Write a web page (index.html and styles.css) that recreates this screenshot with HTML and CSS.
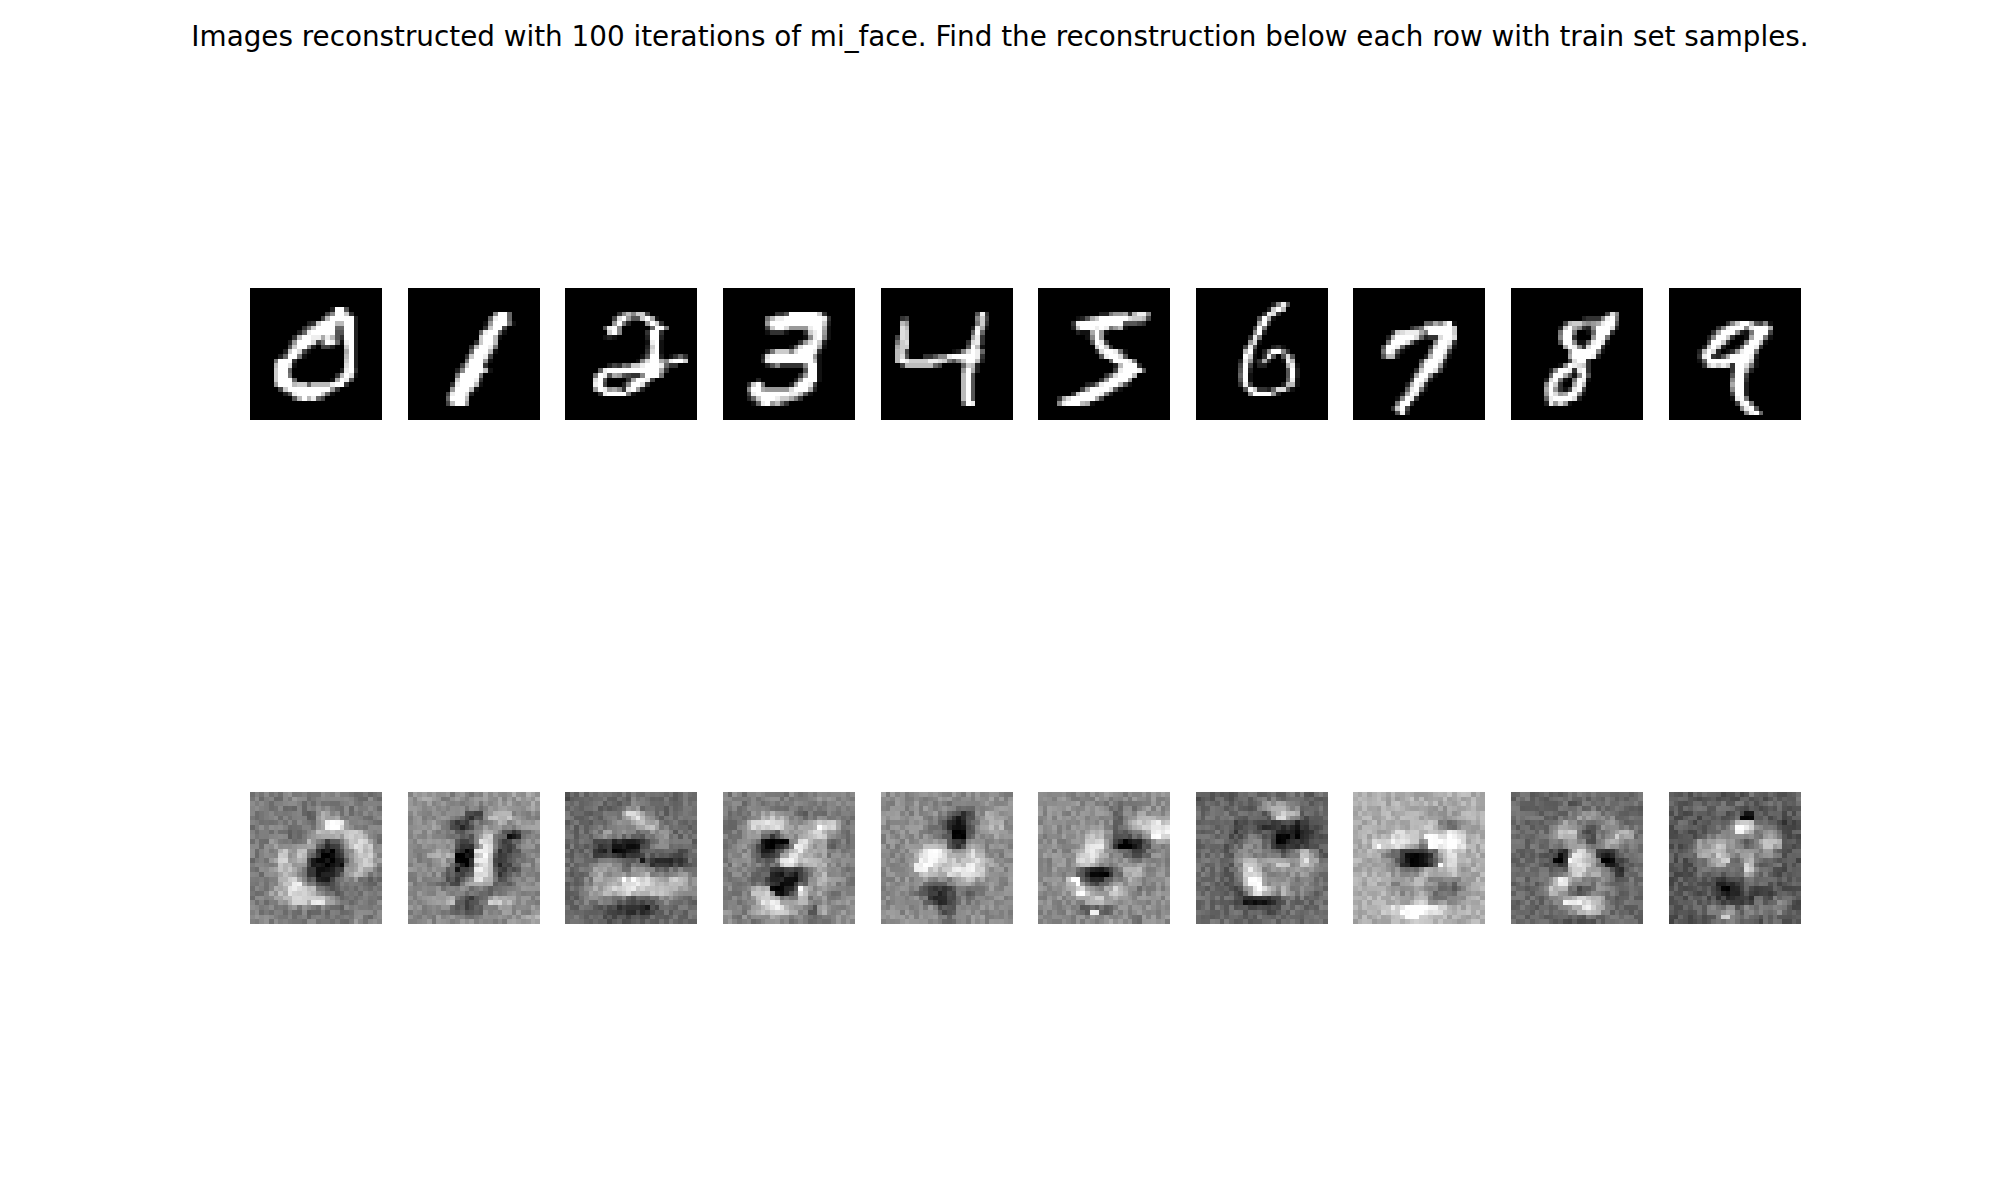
FILE: index.html
```html
<!DOCTYPE html>
<html lang="en">
<head>
<meta charset="utf-8">
<title>mi_face reconstructions</title>
<link rel="stylesheet" href="styles.css">
</head>
<body>
<main class="figure">
  <h1 class="suptitle">Images reconstructed with 100 iterations of mi_face. Find the reconstruction below each row with train set samples.</h1>
  <div class="rows">
    <div class="row" id="train"></div>
    <div class="row" id="recon"></div>
  </div>
</main>
<script src="app.js"></script>
</body>
</html>
```

FILE: styles.css
```css
html, body {
  margin: 0;
  background: #fff;
}
.figure {
  width: 2000px;
  height: 1200px;
  padding-top: 21px;
  box-sizing: border-box;
  overflow: hidden;
}
.suptitle {
  margin: 0 0 235px;
  font-family: "DejaVu Sans", sans-serif;
  font-size: 27.8px;
  font-weight: 400;
  line-height: 32px;
  text-align: center;
  color: #000;
}
.rows {
  display: flex;
  flex-direction: column;
  gap: 372px;
  padding-left: 250.2px;
}
.row {
  display: flex;
  gap: 25.6px;
}
.digit {
  display: block;
  flex: none;
  width: 132px;
  height: 132px;
}
```

FILE: app.js
```js
var TRAIN = [
 [4,"17:2ff5 16:48ffc3 15:4bfffff2 12:23cfffbbff2 11:37cffff66ff2 10:26efffff55ff2 9:3bffeeaeb53ff2 8:29fffd47fe61ef2 8:5cff82044200cf2 7:2cfd41,20:af2 6:26ff71,20:bf2 5:7fff3,20:cf2 5:bffd1,20:df2 5:cff6,19:2ef3 5:cff7,18:3bfd1 5:cfff6,17:1afe5 5:9fffbcc6bbbbeff3 6:4cfffffffff93 7:25efffffc61 9:5bfbe64"],
 [5,"18:8ff6 17:6eff6 16:19fff71 16:3cff4 15:6eff61 15:cffb1 14:3cffb 13:3bffe7 13:6fffb1 12:3cffe4 12:7fff91 11:4cfff3 10:28ffffb1 10:7ffff7 10:cfffe3 9:3efffb1 9:9fffb1 8:4effd2 8:6fffb 8:4bff9"],
 [5,"11:38b8cc4 10:4df955cfa1 10:9f72,17:9fc3 8:5ef8,18:6ff7 9:cf8,17:3ff3 8:121,17:2ff2 17:1ef1 17:2cf1 17:3df1 16:15ff2,22:1363 15:18dffa8effc 9:24376ccefffe633 7:6efffffffffffa3 6:7fe5a954338fff7 6:df5,13:3affe4 6:ef4,12:28ffd3 6:9fe9a83ef92 7:3effff71"],
 [5,"11:335ffffffc3 9:7beeffffffffe3 9:9fffffffffffc2 9:4cffd9999effa1 9:13331,17:3cef91 17:18ef81 16:39dfc2 14:16dfffa1 9:27ccc8dfffe3 8:2dfffffffff91 8:3efffffffffb1 9:258333338ff1 17:5ff1 16:39ff1 7:2,15:29fff1 5:3cf7,14:2affe4 5:8ffa99999dfffa2 5:4efffffffeeb51 5:26cfffecca73 6:16ef9b63"],
 [5,"20:5e3 4:34,20:8c4 4:b9,20:7c3 4:db,19:2ea1 4:dc,19:6f6 3:4dc,19:ae3 3:7cd,18:3de3 3:acc,18:5fb1 3:bc4,15:128dfe6 3:bd5,9:33588efffffe3 3:bfeccccEedc758cffb2 4:4bbbbbb64,17:6cb2 17:9fa2 17:bf5 17:bf5 17:bf5 17:bf5 17:bf5 17:bf5 17:6fe"],
 [5,"13:22799a3bee8 8:125acffffffdccb4 7:3efffffffff55543 7:2bfffefe79b1 8:211af91 10:18f9 11:5fe4 12:cfc3 12:3dffe71 13:5effd5 15:6fffe7 16:2bfff3 16:4efffe5 14:37dfffb 13:39ffff9 10:237efffb51 9:4affffd51 7:3cffffe72 4:3adfffffa4 4:8efffba1"],
 [3,"16:28e5 15:2cfb 14:3ed3 13:5fa1 13:af4 12:4f7 12:8f2 11:3e7 11:9d1 10:4e5,16:231 10:bf2,14:28ff83 10:fc1,14:3e5,18:5d5 9:2e913a3,18:1eb 9:4f4,13:22,19:ae1 9:5f2,19:5f2 9:6f1,19:5f2 9:5f1,19:6e1 9:3e4,18:2bb1 10:5fc33,15:26dd51 11:8ffff92"],
 [7,"15:66a8cf1 12:357efffffc 8:3cdeeea7fffffc 7:2bffffd6233dffd 7:7fffd61,17:8ffe3 6:5ffe61,16:3dffa1 6:7fe51,16:7ffe4 6:5bb2,15:2bffa1 14:4dffe3 14:8fff91 13:3cffd4 12:1aff81 12:4ffc2 11:2bfd3 11:6ef71 10:2afd1 9:18fe3 9:7ff3 8:3cf4 9:5e2"],
 [5,"20:4d8 15:23338ef7 11:4bcc989aeff5 10:2cfa8328fffd2 10:7ff70016fff3 10:8ff30009ff7 10:5ff8116efd1 11:afe83dff3 12:9fffff81 12:affffe2 12:4dff3 10:18fedc3 8:28ffe3ef3 8:6ffa518f5 7:2df7107fe1 7:8fc300afb 7:af9314ef4 7:9fd9aff81 7:6effffd2 7:2e9d91"],
 [7,"12:38cffb5481 10:38efff8efffa 9:3afff8217fff4 8:28ffc3001aff71 8:5ffc30018ffb1 7:2cfc20017ffe3 6:2bfd20139eff7 6:3ef325affffe2 6:16fffffffffc1 7:3cecec3ffd71 13:3ffa2 13:5ff4 13:8ff3 13:aff2 13:8ff2 13:4ff2 13:1ef7 14:4ef7 15:8ef5 16:8ef6"]
];

var RECON = [
 ["77778777787777","87777777777777","7777775a977777","77777779ee8777","7777668aaabb87","778878a635acb7","778b8b72137bb8","778b9a31117ab8","778aa832249a87","777ac96336876","779acdb7567777","7789bcbca77777","87777766767777","88777777677877"],
 ["89988888998999","98888888899899","8888884 48ab888","889863588a8999","88887668c75368","88898548e64688","889aa41ce44688","8889831cd35688","88886 44cc45688","88875 5acb66788","88887876567888","888ab6478bb988","88887646889889","8888888888899a"],
 ["56666667666666","66666677666667","6666669d976666","66667889aa7666","66679876688666","66643212479766","66633323566546","66679756623336","66798978976787","66798abecaaba8","6689abdbabba87","66777654467776","66654333246666","66665555566666"],
 ["78778878788888","77777777777788","77789a97677777","779cddb99acc87","77896588acb877","77861128e99677","7885348cb99787","788767ddaba888","7877623248a877","7776522258a887","877bc614d89777","7779db88a78788","877abdca85a788","87878877777788"],
 ["88888888888988","88888887778888","88888875358a98","88888762158aa8","888887640688a8","88889a943a8888","8889ceea8c9878","8889edbbbbca88","8888dbacddc888","88888777 9a8888","88876435767888","88887335777888","88888955888888","88888877888888"],
 ["88888888788888","88888887777888","88888888689998","8888888869bbdc","88888aa85679ed","88889cd8312588","8888adc8763688","8888dc98898888","88874113 6ab888","888c84468 98888","8889ea8ac87888","88888bc9988888","88886556888888","88888889887888"],
 ["55655666666656","66666568997666","666666559b9565","66664443342345","66654665311345","66656876223255","666578776 57b75","66657b98a98c96","66657cc7788876","66656cf8787766","66653 8ec8a7766","66664222366666","66666554566666","56666666666666"],
 ["aaaaaaaaaaaaaa","aaaaaaaaa9aaaa","aaaaaaa9889aaa","aaaaa9acb7689a","aaaaccbbbcec9a","aacdddb8cefdaa","aaa863225acaaa","aaa972114adaaa","aaaa988baac9aa","aaaa89aa8778aa","aaaa989977 68aa","aaaaa9ac8889aa","aaacdeffecaaaa","aaaaaabbaaaaaa"],
 ["66666666666666","66666656666666","66666679977666","66666986579766","66668bb6478aa6","66667798 58a876","66664 28d932566","666541dba61466","666666bc997366","66669d87786666","6666b964687666","666678bcb96666","66666 78ac96666","66665555566666"],
 ["56556555655556","65665666556656","55556555155555","56556 67dc76535","55556779978735","556 99a87 48ba55","556a9b88a78655","55568a75b66655","555666 76b66555","55555335666555","55555213544555","55655433365775","55567795877855","55555676656655"]
];

var SPOTS = [
 "16,7,3,f 13,23,3,e 13,14,1,1 17,14,1,0 9,19,2,e 22,11,2,d 6,14,1,c 12,22,3,c 9,21,2,c",
 "15,10,1,d 14,12,3,e 14,14,2,e 14,16,2,e 14,17,2,d 10,13,2,0 10,14,2,0 10,16,1,1 21,9,2,1 8,23,2,b 17,23,3,c 17,5,2,b",
 "10,12,2,0 10,11,2,1 12,18,1,f 13,4,2,d 16,14,1,1 12,19,3,d 11,12,1,0",
 "10,10,4,0 10,20,2,0 16,20,1,f 20,7,1,f 15,11,2,e 12,14,2,e 10,23,2,e 6,6,3,d 16,12,1,e 11,21,2,1",
 "15,8,1,0 15,9,1,0 10,13,1,f 7,16,2,e 18,15,2,e 8,14,2,e 7,15,2,e 14,17,2,d",
 "17,11,3,0 11,17,4,0 24,9,2,f 24,8,2,e 11,11,2,e 11,13,1,e 12,11,2,e 7,18,2,f 8,19,1,f 9,21,1,f 11,25,2,e",
 "17,9,2,0 17,10,2,0 11,18,2,f 11,19,2,f 12,20,1,e 10,23,5,1 17,5,2,d 17,15,3,c",
 "12,14,2,0 12,13,2,0 15,9,3,f 16,10,2,f 16,11,2,f 18,15,1,f 10,25,4,f 11,26,3,f 5,11,1,f",
 "9,14,2,0 10,13,1,1 12,14,1,f 19,14,2,0 13,13,2,e 10,18,1,e 11,23,4,e 15,24,2,e 22,9,1,c",
 "15,5,3,0 14,7,2,f 14,8,2,e 11,20,2,0 16,15,1,c 16,16,1,d 11,14,2,c 20,11,2,c 11,26,2,c"
];

var SVGNS = "http://www.w3.org/2000/svg";
var seed = 90210;
function rnd() {
  seed = (seed * 1664525 + 1013904223) >>> 0;
  return seed / 4294967296;
}

function makeSvg(parent, pixels) {
  var byLevel = {};
  for (var y = 0; y < 28; y++) {
    for (var x = 0; x < 28; x++) {
      var v = pixels[y][x];
      (byLevel[v] = byLevel[v] || []).push("M" + x + " " + y + "h1v1h-1z");
    }
  }
  var svg = document.createElementNS(SVGNS, "svg");
  svg.setAttribute("class", "digit");
  svg.setAttribute("viewBox", "0 0 28 28");
  svg.setAttribute("shape-rendering", "crispEdges");
  Object.keys(byLevel).forEach(function (v) {
    var p = document.createElementNS(SVGNS, "path");
    p.setAttribute("d", byLevel[v].join(""));
    p.setAttribute("fill", "rgb(" + v + "," + v + "," + v + ")");
    svg.appendChild(p);
  });
  parent.appendChild(svg);
}

function trainPixels(spec) {
  var px = [];
  for (var i = 0; i < 28; i++) px.push(new Array(28).fill(0));
  spec[1].split(" ").forEach(function (row, r) {
    row.split(",").forEach(function (seg) {
      var parts = seg.split(":");
      var col = parseInt(parts[0], 10);
      var hex = parts[1].toLowerCase();
      for (var k = 0; k < hex.length && col + k < 28; k++) {
        px[spec[0] + r][col + k] = parseInt(hex[k], 16) * 17;
      }
    });
  });
  return px;
}

function reconPixels(spec, spots) {
  var g = spec.map(function (s) {
    var t = s.replace(/ /g, "");
    var out = [];
    for (var i = 0; i < 14; i++) out.push(parseInt(t[i] || t[t.length - 1], 16) * 17 + 4);
    return out;
  });
  var base = g[0][1];
  var px = [];
  for (var y = 0; y < 28; y++) {
    var line = [];
    for (var x = 0; x < 28; x++) {
      var y0 = y >> 1, x0 = x >> 1;
      var y1 = Math.max(0, Math.min(13, y0 + (y % 2 ? 1 : -1)));
      var x1 = Math.max(0, Math.min(13, x0 + (x % 2 ? 1 : -1)));
      var w = 0.16;
      var v = g[y0][x0] * (1 - w) * (1 - w) + g[y0][x1] * w * (1 - w) +
              g[y1][x0] * (1 - w) * w + g[y1][x1] * w * w;
      v = base + (v - base) * 1.15;
      v += (rnd() - 0.5) * 42;
      line.push(Math.max(0, Math.min(255, Math.round(v))));
    }
    px.push(line);
  }
  spots.split(" ").forEach(function (s) {
    var f = s.split(",");
    for (var k = 0; k < +f[2]; k++) {
      var j = Math.round((rnd() - 0.5) * 16);
      var val = parseInt(f[3], 16) * 17 + j;
      px[+f[1]][+f[0] + k] = Math.max(0, Math.min(255, val));
    }
  });
  return px;
}

var train = document.getElementById("train");
var recon = document.getElementById("recon");
TRAIN.forEach(function (s) { makeSvg(train, trainPixels(s)); });
RECON.forEach(function (s, i) { makeSvg(recon, reconPixels(s, SPOTS[i])); });
```
